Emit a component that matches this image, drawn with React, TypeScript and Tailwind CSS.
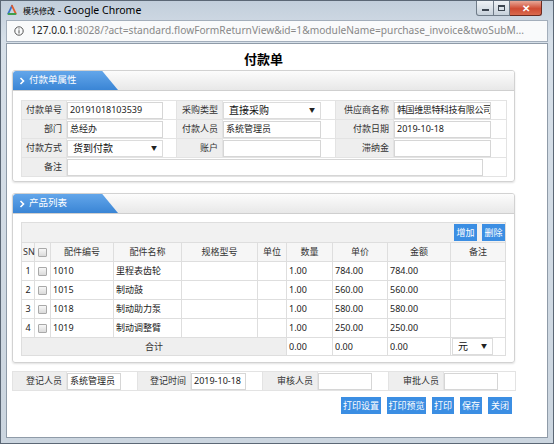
import React from "react";

function Logo() {
  return (
    <svg width="12" height="12" viewBox="0 0 12 12">
      <path d="M6 1.8 L2.2 9.6" stroke="#3b73c9" strokeWidth="1.8" strokeLinecap="round" fill="none" />
      <path d="M6 1.8 L9.8 9.6" stroke="#e25a2c" strokeWidth="1.8" strokeLinecap="round" fill="none" />
      <path d="M2.6 10 L9.4 10" stroke="#3f9f4a" strokeWidth="1.8" strokeLinecap="round" fill="none" />
    </svg>
  );
}

function InfoIcon() {
  return (
    <svg width="10" height="10" viewBox="0 0 10 10">
      <circle cx="5" cy="5" r="4.2" stroke="#555" strokeWidth="1" fill="none" />
      <rect x="4.5" y="4.2" width="1" height="3.3" fill="#555" />
      <rect x="4.5" y="2.4" width="1" height="1" fill="#555" />
    </svg>
  );
}

function Chevron() {
  return (
    <svg width="6" height="8" viewBox="0 0 6 8">
      <path d="M1.5 1 L4.5 4 L1.5 7" stroke="#fff" strokeWidth="1.6" fill="none" />
    </svg>
  );
}

function Tab({ label }: { label: string }) {
  return (
    <div className="w-[105px] h-full rounded-tl-[3px] bg-[linear-gradient(to_bottom,#63a6ea,#3a85d5)] [clip-path:polygon(0_0,85%_0,100%_100%,0_100%)] flex items-center pl-[6px] gap-[4px] text-white text-[9.5px]">
      <Chevron />
      <span>{label}</span>
    </div>
  );
}

function Lbl({ children, className = "" }: { children?: React.ReactNode; className?: string }) {
  return (
    <td className={"bg-[#eeeeee] border border-[#e3e3e3] text-right pr-[4px] text-[#333] whitespace-nowrap " + className}>
      {children}
    </td>
  );
}

function Box({ children, className = "" }: { children?: React.ReactNode; className?: string }) {
  return (
    <div className={"h-[17px] border border-[#d6d6d6] bg-white flex items-center pl-[2px] whitespace-nowrap overflow-hidden text-[#222] " + className}>
      {children}
    </div>
  );
}

function Sel({ text, className = "" }: { text: string; className?: string }) {
  return (
    <div className={"h-[17px] border border-[#dcdcdc] bg-white flex items-center justify-between pl-[5px] pr-[5px] text-[10px] text-[#111] " + className}>
      <span>{text}</span>
      <span className="text-[6px] text-[#222]">▼</span>
    </div>
  );
}

function Btn({ children, className = "" }: { children: React.ReactNode; className?: string }) {
  return (
    <div className={"h-[17px] bg-[#3b8ee3] text-white text-[9px] whitespace-nowrap flex items-center justify-center " + className}>
      {children}
    </div>
  );
}

function Check() {
  return <span className="inline-block w-[9px] h-[9px] border border-[#a9a9a9] rounded-[1px] bg-[linear-gradient(to_bottom,#f7f7f7,#dadada)] align-middle" />;
}

const VC = "border border-[#e3e3e3] p-0 align-middle";
const TC = "border border-[#dedede] px-[2px] align-middle whitespace-nowrap";

const rows = [
  { sn: "1", code: "1010", name: "里程表齿轮", qty: "1.00", price: "784.00", amt: "784.00" },
  { sn: "2", code: "1015", name: "制动鼓", qty: "1.00", price: "560.00", amt: "560.00" },
  { sn: "3", code: "1018", name: "制动助力泵", qty: "1.00", price: "580.00", amt: "580.00" },
  { sn: "4", code: "1019", name: "制动调整臂", qty: "1.00", price: "250.00", amt: "250.00" },
];

export default function App() {
  return (
    <div className="w-[554px] h-[444px] overflow-hidden border border-[#5b6775] bg-[linear-gradient(to_bottom,#c2cedb,#d7e0e9_40px,#cbd5df)] flex flex-col font-['Noto_Sans','Noto_Sans_CJK_SC',sans-serif] text-[#222]">
      {/* title bar */}
      <div className="h-[19px] flex items-start shrink-0">
        <div className="h-[18px] flex items-center pl-[5px] gap-[5px]">
          <Logo />
          <span className="text-[10.5px] text-black leading-none">
            <span className="text-[8px]">模块修改</span> - Google Chrome
          </span>
        </div>
        <div className="ml-auto mr-[11px] flex">
          <div className="w-[18px] h-[15px] border border-[#6f7b88] border-t-0 rounded-bl-[3px] bg-[linear-gradient(to_bottom,#eef2f6,#c7d1db)] flex items-end justify-center pb-[4px]">
            <div className="w-[7px] h-[2px] bg-[#3c4550]" />
          </div>
          <div className="w-[16px] h-[15px] border border-[#6f7b88] border-t-0 border-l-0 bg-[linear-gradient(to_bottom,#eef2f6,#c7d1db)] flex items-center justify-center">
            <div className="w-[7px] h-[6px] border border-[#3c4550] border-t-2" />
          </div>
          <div className="w-[32px] h-[15px] border border-[#6b2a20] border-t-0 border-l-0 rounded-br-[3px] bg-[linear-gradient(to_bottom,#e9a898,#cf4b33_55%,#d96a4f)] flex items-center justify-center text-white text-[10px] font-bold leading-none">
            ✕
          </div>
        </div>
      </div>

      {/* address bar */}
      <div className="h-[23px] px-[5px] shrink-0">
        <div className="h-[22px] border border-[#a3aebb] bg-[#f9fafb] flex items-center pl-[7px] gap-[7px] overflow-hidden">
          <InfoIcon />
          <span className="text-[10.2px] whitespace-nowrap text-[#888]">
            <span className="text-[#222]">127.0.0.1</span>:8028/?act=standard.flowFormReturnView&amp;id=1&amp;moduleName=purchase_invoice&amp;twoSubM...
          </span>
        </div>
      </div>

      {/* content */}
      <div className="mx-[5px] h-[395px] shrink-0 border border-[#8f9ba8] bg-white pl-[5px] flex flex-col text-[9px]">
        <div className="w-[503px] h-[26px] pt-[7px] text-center text-[13px] font-bold leading-[16px] text-black">付款单</div>

        {/* panel 1 */}
        <div className="w-[503px] h-[112px] border border-[#d2d2d2] rounded-[3px] shadow-[0_1px_2px_rgba(0,0,0,0.12)] flex flex-col overflow-hidden">
          <div className="h-[20px] border-b border-[#cfcfcf] bg-[linear-gradient(to_bottom,#fcfcfc,#e8e8e8)] shrink-0">
            <Tab label="付款单属性" />
          </div>
          <div className="px-[8px] pt-[9px]">
            <table className="w-[485px] table-fixed border-collapse">
              <colgroup>
                <col className="w-[45px]" />
                <col className="w-[110px]" />
                <col className="w-[46px]" />
                <col className="w-[113px]" />
                <col className="w-[58px]" />
                <col className="w-[113px]" />
              </colgroup>
              <tbody>
                <tr className="h-[19px]">
                  <Lbl>付款单号</Lbl>
                  <td className={VC}><Box className="w-[96px]">20191018103539</Box></td>
                  <Lbl>采购类型</Lbl>
                  <td className={VC}><Sel className="w-[98px]" text="直接采购" /></td>
                  <Lbl>供应商名称</Lbl>
                  <td className={VC}><Box className="w-[97px] tracking-[-0.4px]">韩国维思特科技有限公司</Box></td>
                </tr>
                <tr className="h-[19px]">
                  <Lbl>部门</Lbl>
                  <td className={VC}><Box className="w-[96px]">总经办</Box></td>
                  <Lbl>付款人员</Lbl>
                  <td className={VC}><Box className="w-[98px]">系统管理员</Box></td>
                  <Lbl>付款日期</Lbl>
                  <td className={VC}><Box className="w-[97px]">2019-10-18</Box></td>
                </tr>
                <tr className="h-[19px]">
                  <Lbl>付款方式</Lbl>
                  <td className={VC}><Sel className="w-[96px]" text="货到付款" /></td>
                  <Lbl>账户</Lbl>
                  <td className={VC}><Box className="w-[98px]" /></td>
                  <Lbl>滞纳金</Lbl>
                  <td className={VC}><Box className="w-[97px]" /></td>
                </tr>
                <tr className="h-[19px]">
                  <Lbl>备注</Lbl>
                  <td className={VC} colSpan={5}><Box className="w-[416px]" /></td>
                </tr>
              </tbody>
            </table>
          </div>
        </div>

        {/* panel 2 */}
        <div className="mt-[11px] w-[503px] h-[170px] border border-[#d2d2d2] rounded-[3px] shadow-[0_1px_2px_rgba(0,0,0,0.12)] flex flex-col overflow-hidden">
          <div className="h-[20px] border-b border-[#cfcfcf] bg-[linear-gradient(to_bottom,#fcfcfc,#e8e8e8)] shrink-0">
            <Tab label="产品列表" />
          </div>
          <div className="px-[8px] pt-[8px]">
            <table className="w-[484px] table-fixed border-collapse">
              <colgroup>
                <col className="w-[13px]" />
                <col className="w-[16px]" />
                <col className="w-[63px]" />
                <col className="w-[68px]" />
                <col className="w-[76px]" />
                <col className="w-[29px]" />
                <col className="w-[46px]" />
                <col className="w-[55px]" />
                <col className="w-[63px]" />
                <col className="w-[55px]" />
              </colgroup>
              <tbody>
                <tr className="h-[20px] bg-[#f1f1f1]">
                  <td colSpan={10} className="border border-[#dedede] p-0">
                    <div className="flex justify-end gap-[5px]">
                      <Btn className="w-[23px]">增加</Btn>
                      <Btn className="w-[23px]">删除</Btn>
                    </div>
                  </td>
                </tr>
                <tr className="h-[19px] bg-[#f6f6f6] text-[#333]">
                  <td className="border border-[#dedede] pl-[1px] whitespace-nowrap">SN</td>
                  <td className="border border-[#dedede] text-center"><Check /></td>
                  <td className="border border-[#dedede] text-center">配件编号</td>
                  <td className="border border-[#dedede] text-center">配件名称</td>
                  <td className="border border-[#dedede] text-center">规格型号</td>
                  <td className="border border-[#dedede] text-center">单位</td>
                  <td className="border border-[#dedede] text-center">数量</td>
                  <td className="border border-[#dedede] text-center">单价</td>
                  <td className="border border-[#dedede] text-center">金额</td>
                  <td className="border border-[#dedede] text-center">备注</td>
                </tr>
                {rows.map((r) => (
                  <tr key={r.sn} className="h-[19px] bg-white">
                    <td className={TC + " text-center"}>{r.sn}</td>
                    <td className="border border-[#dedede] text-center"><Check /></td>
                    <td className={TC}>{r.code}</td>
                    <td className={TC}>{r.name}</td>
                    <td className={TC}></td>
                    <td className={TC}></td>
                    <td className={TC}>{r.qty}</td>
                    <td className={TC}>{r.price}</td>
                    <td className={TC}>{r.amt}</td>
                    <td className={TC}></td>
                  </tr>
                ))}
                <tr className="h-[18px] bg-white">
                  <td colSpan={6} className="border border-[#dedede] bg-[#efefef] text-center text-[#333]">合计</td>
                  <td className={TC}>0.00</td>
                  <td className={TC}>0.00</td>
                  <td className={TC}>0.00</td>
                  <td className="border border-[#dedede] p-0 pl-[1px]">
                    <Sel className="w-[41px] h-[15px]" text="元" />
                  </td>
                </tr>
              </tbody>
            </table>
          </div>
        </div>

        {/* bottom table */}
        <table className="mt-[8px] w-[503px] table-fixed border-collapse">
          <colgroup>
            <col className="w-[54px]" />
            <col className="w-[71px]" />
            <col className="w-[53px]" />
            <col className="w-[72px]" />
            <col className="w-[55px]" />
            <col className="w-[71px]" />
            <col className="w-[55px]" />
            <col className="w-[72px]" />
          </colgroup>
          <tbody>
            <tr className="h-[19px]">
              <Lbl>登记人员</Lbl>
              <td className={VC}><Box className="w-[54px]">系统管理员</Box></td>
              <Lbl>登记时间</Lbl>
              <td className={VC}><Box className="w-[55px]">2019-10-18</Box></td>
              <Lbl>审核人员</Lbl>
              <td className={VC}><Box className="w-[54px]" /></td>
              <Lbl>审批人员</Lbl>
              <td className={VC}><Box className="w-[54px]" /></td>
            </tr>
          </tbody>
        </table>

        {/* buttons */}
        <div className="mt-[6px] w-[503px] pr-[3px] flex justify-end gap-[6px]">
          <Btn className="w-[40px]">打印设置</Btn>
          <Btn className="w-[39px]">打印预览</Btn>
          <Btn className="w-[22px]">打印</Btn>
          <Btn className="w-[22px]">保存</Btn>
          <Btn className="w-[24px]">关闭</Btn>
        </div>
      </div>
    </div>
  );
}
